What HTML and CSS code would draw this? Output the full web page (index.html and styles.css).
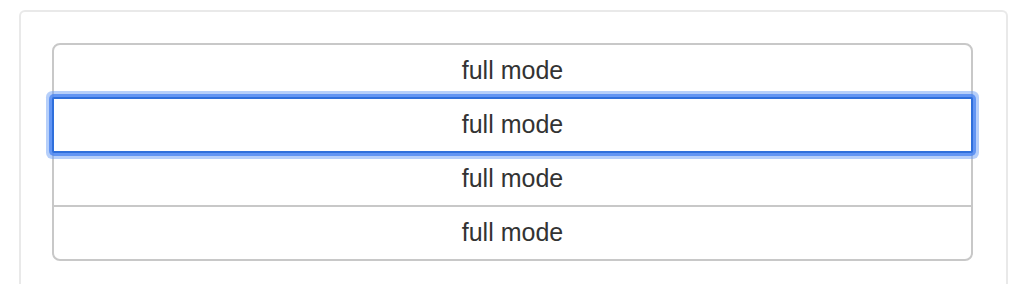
FILE: index.html
```html
<!DOCTYPE html>
<html>
<head>
<meta charset="utf-8">
<link rel="stylesheet" href="styles.css">
</head>
<body>
<div class="panel">
  <div class="group">
    <button class="btn first">full mode</button>
    <button class="btn focused">full mode</button>
    <button class="btn">full mode</button>
    <button class="btn last">full mode</button>
  </div>
</div>
</body>
</html>
```
FILE: styles.css
```css
html, body {
  margin: 0;
  background: #ffffff;
}
body {
  font-family: "Liberation Sans", Arial, sans-serif;
}
.panel {
  margin: 10px 16px 0 19px;
  border: 2px solid #e9e9e9;
  border-bottom: none;
  border-radius: 6px 6px 0 0;
  padding: 31px 33px 24px 31px;
}
.group {
  display: flex;
  flex-direction: column;
}
.btn {
  position: relative;
  height: 56px;
  margin: -2px 0 0 0;
  border: 2px solid #c8c8c8;
  background: #ffffff;
  color: #333333;
  font-family: "Liberation Sans", Arial, sans-serif;
  font-size: 25px;
  padding: 0 0 2px 0;
  border-radius: 0;
  outline: none;
}
.btn.first {
  margin-top: 0;
  border-radius: 8px 8px 0 0;
}
.btn.last {
  border-radius: 0 0 8px 8px;
}
.btn.focused {
  z-index: 1;
  border-color: #2f6fdb;
  border-radius: 2px;
  box-shadow: 0 0 0 3px rgba(70, 130, 240, 0.75), 0 0 0 6px rgba(110, 160, 245, 0.5);
}
```
